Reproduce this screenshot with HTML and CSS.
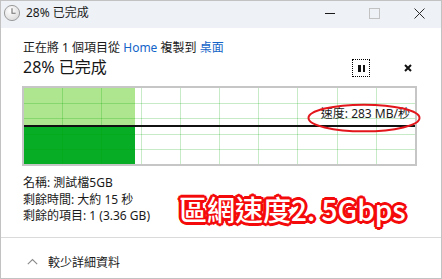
FILE: index.html
```html
<!DOCTYPE html>
<html lang="zh-Hant">
<head>
<meta charset="utf-8">
<title>28% 已完成</title>
<link rel="stylesheet" href="styles.css">
</head>
<body>
<div class="window">
  <div class="titlebar">
    <svg class="app-icon" width="18" height="18" viewBox="0 0 18 18">
      <defs>
        <radialGradient id="cg" cx="0.4" cy="0.35" r="0.7">
          <stop offset="0" stop-color="#ffffff"/>
          <stop offset="1" stop-color="#d9d9d9"/>
        </radialGradient>
      </defs>
      <circle cx="9" cy="9" r="7.6" fill="url(#cg)" stroke="#9c9c9c" stroke-width="1"/>
      <path d="M9 4.2V9.3H12.6" fill="none" stroke="#6f6f6f" stroke-width="1.1"/>
    </svg>
    <span class="title">28% 已完成</span>
    <div class="controls">
      <span class="ctl"><svg width="10" height="10" viewBox="0 0 10 10"><path d="M0 5.5H10" stroke="#1a1a1a" stroke-width="1"/></svg></span>
      <span class="ctl"><svg width="11" height="11" viewBox="0 0 11 11"><rect x="0.5" y="0.5" width="10" height="10" fill="none" stroke="#c2c2c2" stroke-width="1"/></svg></span>
      <span class="ctl"><svg width="11" height="11" viewBox="0 0 11 11"><path d="M0.5 0.5L10.5 10.5M10.5 0.5L0.5 10.5" stroke="#2a2a2a" stroke-width="1"/></svg></span>
    </div>
  </div>

  <div class="main">
    <div class="desc">正在將 1 個項目從 <span class="link">Home</span> 複製到 <span class="link">桌面</span></div>
    <div class="status-row">
      <span class="pct">28% 已完成</span>
      <div class="actions">
        <span class="pause"><i></i><i></i></span>
        <span class="cancel"><svg width="8" height="8" viewBox="0 0 8 8"><path d="M1 1L7 7M7 1L1 7" stroke="#111" stroke-width="2"/></svg></span>
      </div>
    </div>

    <div class="graph">
      <svg class="chart" width="391" height="76" viewBox="0 0 391 76" shape-rendering="crispEdges">
        <rect x="0" y="0" width="391" height="76" fill="#ffffff"/>
        <rect x="0" y="0" width="111" height="37" fill="#ade68f"/>
        <rect x="0" y="38" width="111" height="38" fill="#07ad24"/>
        <g stroke="rgba(0,165,0,0.22)" stroke-width="1">
          <path d="M38.5 0V76M77.5 0V76M117.5 0V76M156.5 0V76M195.5 0V76M234.5 0V76M273.5 0V76M313.5 0V76M352.5 0V76"/>
          <path d="M0 15.5H391M0 30.5H391M0 46.5H391M0 61.5H391"/>
        </g>
        <rect x="0" y="37" width="391" height="1.5" fill="#111111"/>
      </svg>
      <span class="speed">速度: 283 MB/秒</span>
      <svg class="ring" width="114" height="30" viewBox="0 0 114 30">
        <ellipse cx="57" cy="15" rx="55.5" ry="13.3" fill="none" stroke="#e3161c" stroke-width="2"/>
      </svg>
    </div>

    <div class="details">
      <div>名稱: 測試檔5GB</div>
      <div>剩餘時間: 大約 15 秒</div>
      <div>剩餘的項目: 1 (3.36 GB)</div>
    </div>

    <div class="annotation">區網速度2. 5Gbps</div>
  </div>

  <div class="footer">
    <svg class="chev" width="11" height="7" viewBox="0 0 11 7"><path d="M0.8 6.2L5.5 1.5L10.2 6.2" fill="none" stroke="#8a8a8a" stroke-width="1.1"/></svg>
    <span>較少詳細資料</span>
  </div>
</div>
</body>
</html>
```

FILE: styles.css
```css
html, body {
  margin: 0;
  padding: 0;
  background: #ffffff;
}

body {
  font-family: "Noto Sans", "Noto Sans CJK TC", sans-serif;
  font-size: 12px;
  color: #1a1a1a;
}

.window {
  box-sizing: border-box;
  width: 442px;
  height: 279px;
  border: 1px solid #c2c2c2;
  display: flex;
  flex-direction: column;
  background: #ffffff;
  overflow: hidden;
}

.titlebar {
  box-sizing: border-box;
  height: 27px;
  flex: none;
  background: #eef1f6;
  display: flex;
  align-items: center;
  padding-bottom: 3px;
}

.app-icon {
  margin-left: 2px;
  flex: none;
}

.title {
  margin-left: 5px;
  font-size: 12px;
  line-height: 16px;
  color: #1b1b1b;
}

.controls {
  margin-left: auto;
  display: flex;
  align-items: center;
}

.ctl {
  width: 45px;
  height: 16px;
  display: flex;
  align-items: center;
  justify-content: center;
}

.ctl:last-child {
  width: 44px;
}

.main {
  position: relative;
  box-sizing: border-box;
  height: 209px;
  flex: none;
  padding: 11px 24px 0 21px;
}

.desc {
  line-height: 17px;
  padding-left: 1px;
  white-space: nowrap;
}

.link {
  color: #1464c8;
}

.status-row {
  height: 22px;
  display: flex;
  align-items: center;
  justify-content: space-between;
}

.pct {
  font-size: 16px;
  line-height: 22px;
  padding-left: 1px;
  color: #161616;
}

.actions {
  display: flex;
  align-items: center;
  gap: 29px;
  padding-top: 2px;
}

.pause {
  box-sizing: border-box;
  width: 18px;
  height: 18px;
  border: 1px dotted #000000;
  display: flex;
  align-items: center;
  justify-content: center;
  gap: 2px;
  padding-left: 1px;
}

.pause i {
  display: block;
  width: 2.5px;
  height: 7px;
  background: #111111;
}

.cancel {
  width: 18px;
  height: 18px;
  display: flex;
  align-items: center;
  justify-content: center;
}

.graph {
  position: relative;
  box-sizing: border-box;
  margin-top: 8px;
  width: 395px;
  height: 80px;
  border: 2px solid #c6c6c6;
}

.chart {
  display: block;
}

.speed {
  position: absolute;
  right: 5px;
  top: 18px;
  line-height: 16px;
  color: #1a1a1a;
  white-space: nowrap;
}

.ring {
  position: absolute;
  left: 283px;
  top: 15px;
}

.details {
  margin-top: 9px;
  line-height: 16.5px;
  padding-left: 1px;
}

.annotation {
  position: absolute;
  left: 178px;
  top: 165px;
  font-family: "Noto Sans CJK TC", sans-serif;
  font-weight: 500;
  font-size: 28px;
  line-height: 32px;
  color: #ffffff;
  white-space: nowrap;
  text-shadow:
    2px 0 0 #f40a0a, -2px 0 0 #f40a0a, 0 2px 0 #f40a0a, 0 -2px 0 #f40a0a,
    2px 2px 0 #f40a0a, -2px -2px 0 #f40a0a, 2px -2px 0 #f40a0a, -2px 2px 0 #f40a0a,
    1px 2px 0 #f40a0a, -1px 2px 0 #f40a0a, 2px 1px 0 #f40a0a, -2px 1px 0 #f40a0a,
    1px -2px 0 #f40a0a, -1px -2px 0 #f40a0a, 2px -1px 0 #f40a0a, -2px -1px 0 #f40a0a,
    3px 0 0 #f40a0a, -3px 0 0 #f40a0a, 0 3px 0 #f40a0a, 0 -3px 0 #f40a0a;
}

.footer {
  box-sizing: border-box;
  flex: 1;
  border-top: 1px solid #dadada;
  display: flex;
  align-items: center;
  padding: 7px 0 0 26px;
  gap: 10px;
  color: #1a1a1a;
}

.chev {
  flex: none;
}
```
